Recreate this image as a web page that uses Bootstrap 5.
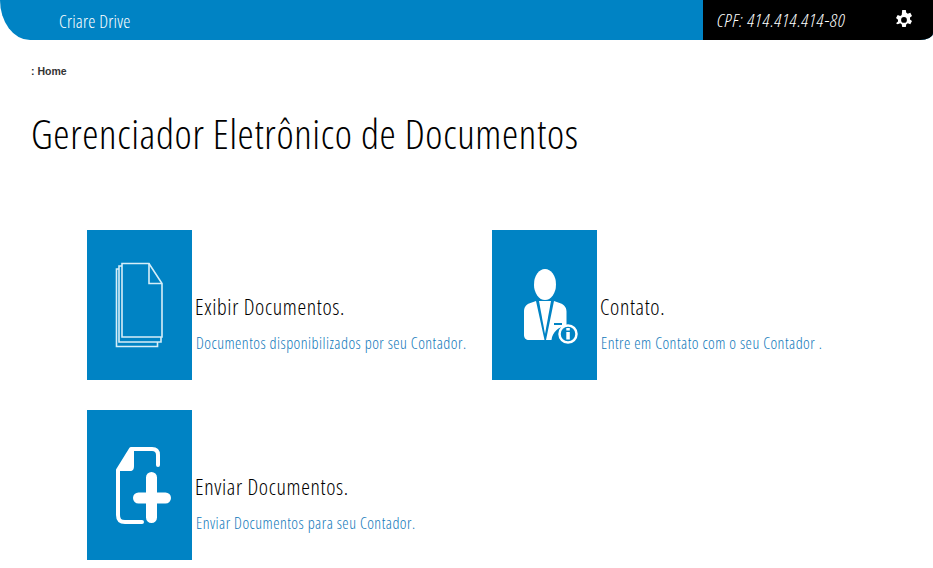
<!DOCTYPE html>
<html lang="pt-BR">
<head>
    <meta charset="UTF-8">
    <meta name="viewport" content="width=device-width, initial-scale=1.0">
    <title>Criare Drive</title>
    <link href="https://cdn.jsdelivr.net/npm/bootstrap@5.3.0/dist/css/bootstrap.min.css" rel="stylesheet">
    <style>
        body { font-family: "Open Sans", "Liberation Sans", sans-serif; font-stretch: 75%; background: #fff; overflow: hidden; }
        .top-bar { height: 40px; background: #0083c4; border-radius: 0 0 13px 30px / 0 0 7px 40px; overflow: hidden; }
        .brand-name { padding-left: 59px; font-size: 18px; font-weight: 300; letter-spacing: .25px; color: #fff; text-decoration: none; line-height: 43px; }
        .user-area { width: 230px; background: #000; color: #fff; padding-left: 14px; padding-right: 21px; }
        .user-cpf { font-size: 19px; font-style: italic; font-weight: 300; letter-spacing: .8px; }
        .crumb-line { padding: 24px 0 0 31px; font-family: "Liberation Sans", sans-serif; font-stretch: normal; font-size: 10.500px; font-weight: 700; line-height: 14px; color: #333; }
        .page-title { margin: 29px 0 0 31px; font-size: 41px; font-weight: 300; letter-spacing: .65px; line-height: 52px; color: #000; }
        .tile-grid { display: grid; grid-template-columns: 405px 1fr; row-gap: 30px; padding: 71px 0 0 87px; }
        .tile-icon { width: 105px; height: 150px; background: #0083c4; flex-shrink: 0; }
        .tile-text { padding: 62px 0 0 3px; }
        .tile-name { margin: 0; font-size: 22px; font-weight: 300; letter-spacing: .65px; line-height: 28px; color: #000; }
        .tile-desc { display: block; margin-top: 13px; padding-left: 1px; font-size: 16px; font-weight: 300; letter-spacing: .47px; line-height: 20px; color: #0f78ba; text-decoration: none; }
    </style>
</head>
<body>
    <!-- Header -->
    <div class="top-bar d-flex justify-content-between">
        <a href="#" class="brand-name">Criare Drive</a>
        <div class="user-area d-flex align-items-center justify-content-between">
            <span class="user-cpf">CPF: 414.414.414-80</span>
            <svg width="16" height="20" viewBox="0 0 16 20" aria-hidden="true">
                <path fill="#fff" fill-rule="evenodd" d="M6.200 0h3.600l.5 2.800 1.500.9 2.500-1 1.700 3.200-2 1.700v1.800l2 1.700-1.700 3.200-2.500-1-1.500.9-.5 2.800H6.200l-.5-2.800-1.500-.9-2.500 1L0 13.300l2-1.700V9.800l-2-1.700 1.700-3.200 2.500 1 1.500-.9zM8 7a2.900 2.900 0 1 0 0 5.800A2.900 2.900 0 0 0 8 7z"/>
            </svg>
        </div>
    </div>

    <div class="crumb-line">: Home</div>
    <h1 class="page-title">Gerenciador Eletrônico de Documentos</h1>

    <!-- Tiles -->
    <div class="tile-grid">
        <div class="d-flex">
            <div class="tile-icon">
                <svg width="105" height="150" viewBox="0 0 105 150" aria-hidden="true">
                    <g fill="none" stroke="#d6eef8" stroke-width="1.600">
                        <path d="M35 33.500h27l13 20v53.500H35z"/>
                        <path d="M62 33.500v20h13"/>
                        <path d="M35 36h-3v76h42v-5"/>
                        <path d="M32 39h-2.500v77.500h41V112"/>
                    </g>
                </svg>
            </div>
            <div class="tile-text">
                <h2 class="tile-name">Exibir Documentos.</h2>
                <a href="#" class="tile-desc">Documentos disponibilizados por seu Contador.</a>
            </div>
        </div>
        <div class="d-flex">
            <div class="tile-icon">
                <svg width="105" height="150" viewBox="0 0 105 150" aria-hidden="true">
                    <ellipse cx="53" cy="54.500" rx="11" ry="15.500" fill="#fff"/>
                    <path fill="#fff" d="M44 71l8.500 39H37c-3 0-5-2-5-5V82c0-5 2-7 5-8.500zM62 71l7 2.500c3 1.500 5.500 3.500 5.500 8V96c-8 .5-14 6-15 14H54z"/>
                    <path fill="#fff" d="M47 71h12l-6 33z"/>
                    <path stroke="#0083c4" stroke-width="2" d="M62 94h8"/>
                    <circle cx="76" cy="104" r="8.500" fill="#0083c4" stroke="#fff" stroke-width="2.500"/>
                    <rect x="74.300" y="102" width="3.500" height="7.500" fill="#fff"/>
                    <rect x="74.300" y="98" width="3.500" height="2.500" fill="#fff"/>
                </svg>
            </div>
            <div class="tile-text">
                <h2 class="tile-name">Contato.</h2>
                <a href="#" class="tile-desc">Entre em Contato com o seu Contador .</a>
            </div>
        </div>
        <div class="d-flex">
            <div class="tile-icon">
                <svg width="105" height="150" viewBox="0 0 105 150" aria-hidden="true">
                    <path fill="none" stroke="#fff" stroke-width="4" stroke-linecap="round" stroke-linejoin="round" d="M55 112H38c-5 0-7-2-7-7V60L44 39h21c4 0 6 2 6 6v10"/>
                    <path fill="#fff" d="M30 60L44 38h3v18c0 3-1 5-4 5H30z"/>
                    <path stroke="#fff" stroke-width="11" stroke-linecap="round" d="M64.500 67.500v40M51.500 88h27"/>
                </svg>
            </div>
            <div class="tile-text">
                <h2 class="tile-name">Enviar Documentos.</h2>
                <a href="#" class="tile-desc">Enviar Documentos para seu Contador.</a>
            </div>
        </div>
    </div>

    <script src="https://cdn.jsdelivr.net/npm/bootstrap@5.3.0/dist/js/bootstrap.bundle.min.js"></script>
</body>
</html>
